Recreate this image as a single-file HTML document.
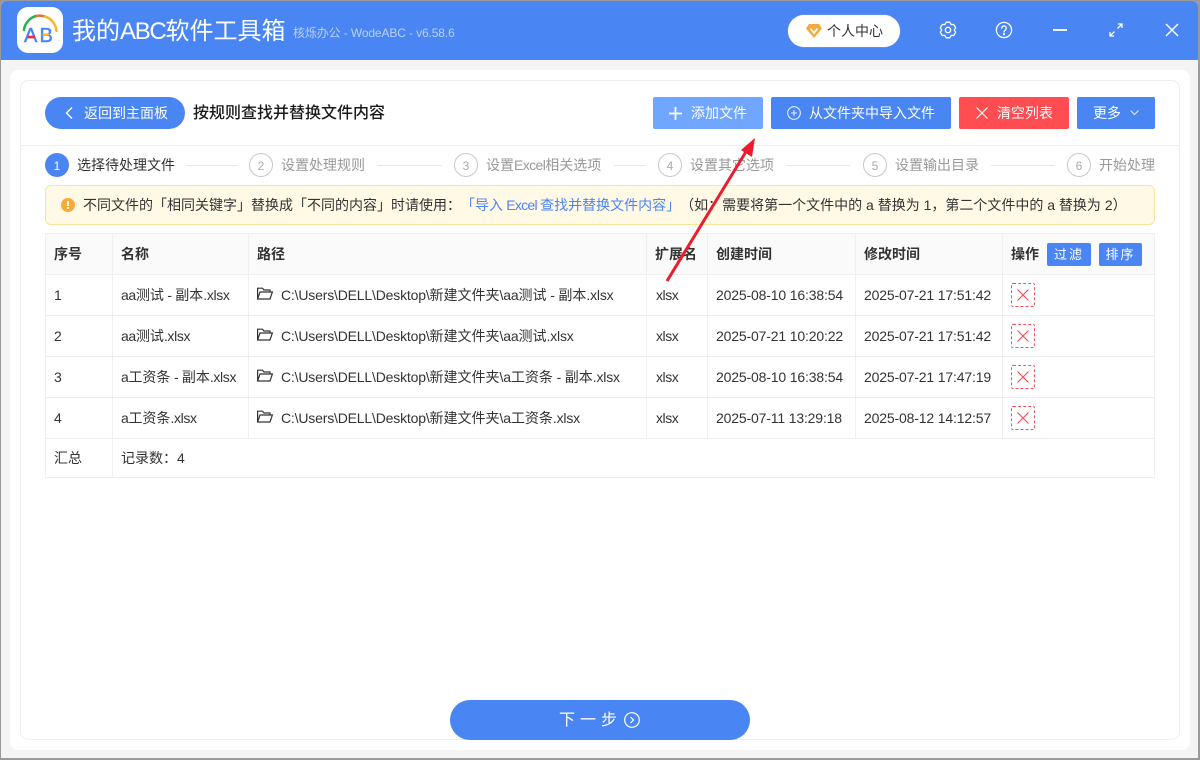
<!DOCTYPE html>
<html lang="zh"><head><meta charset="utf-8"><title>我的ABC软件工具箱</title>
<style>
*{box-sizing:border-box}
html,body{margin:0;padding:0;width:1200px;height:760px;overflow:hidden;background:#9a9a9a;font-family:"Liberation Sans","Noto Sans CJK SC",sans-serif;color:#333;text-spacing-trim:space-all}
div,span{position:absolute;white-space:nowrap}
svg{position:absolute;overflow:visible}
u{text-decoration:none;letter-spacing:-.35px}
.p u{letter-spacing:-.18px}
.t{font-size:14px;line-height:20px}
.d{letter-spacing:-.16px}
.e{letter-spacing:-.45px}
.btn{background:#4a85f4;border-radius:2px;height:32px;top:97px;color:#fff;font-size:14px;line-height:32px}
.c{width:24px;height:24px;border:1px solid #c8c8c8;border-radius:50%;top:153px;text-align:center;font-size:12px;line-height:24px;color:#aaa;background:#fff}
.l{height:1px;top:165px;background:#e8e8e8}
.s{font-size:14px;line-height:20px;top:155px;color:#999}
.s u{letter-spacing:-.6px}
.h{font-size:14px;line-height:20px;font-weight:bold;color:#333;top:244px}
.v{width:1px;background:#efefef;top:234px;height:205px}
.r{height:1px;background:#efefef;left:45px;width:1110px}
.x{width:24px;height:24px;left:1011px;border:1px dashed #f4525a;border-radius:2px}
.fb{background:#4a85f4;color:#fff;border-radius:2px;top:243px;height:23px;line-height:23px;text-align:center;font-size:13px;letter-spacing:2px}
</style></head><body>
<div id="win" style="left:1px;top:1px;width:1197px;height:757px;background:#f4f4f4;border-radius:6px 6px 0 0;overflow:hidden">
<div style="left:0;top:0;width:1197px;height:59px;background:#4a85f4"></div>
<div style="left:9px;top:69px;width:1180px;height:680px;background:#fff;border-radius:8px"></div>
<div style="left:19px;top:79px;width:1160px;height:660px;border:1px solid #eee;border-radius:8px"></div>
</div>

<!-- logo -->
<div style="left:17px;top:7px;width:46px;height:46px;background:#fff;border-radius:11px"></div>
<svg style="left:17px;top:7px" width="46" height="46" viewBox="0 0 46 46" fill="none">
<path d="M7 23A16.500 16.500 0 0 1 19 9" stroke="#2fae4e" stroke-width="2.500" stroke-linecap="round"/>
<path d="M19 9A16.500 16.500 0 0 1 28 9.500" stroke="#e8703c" stroke-width="2.500"/>
<path d="M28 9.500A16.500 16.500 0 0 1 39.500 24" stroke="#f5b62e" stroke-width="2.500" stroke-linecap="round"/>
<text x="7" y="35" font-family="Liberation Sans" font-size="20" fill="#4a85f4" stroke="#4a85f4" stroke-width=".5">A</text>
<text x="22.500" y="35" font-family="Liberation Sans" font-size="20" fill="#4a85f4" stroke="#4a85f4" stroke-width=".5">B</text>
<path d="M11 30H18" stroke="#ee2d33" stroke-width="2.600"/>
<path d="M25.500 27.500H32" stroke="#f5b62e" stroke-width="2.200"/>
</svg>
<div style="left:72px;top:15px;font-size:24px;line-height:34px;color:#fff">我的<u style="letter-spacing:-1.3px">ABC</u>软件工具箱</div>
<div style="left:293px;top:24px;font-size:12px;line-height:18px;color:#b9d0fb;letter-spacing:-.12px">核烁办公 - WodeABC - v6.58.6</div>

<!-- top right -->
<div style="left:788px;top:15px;width:112px;height:32px;background:#fff;border-radius:16px;box-shadow:0 0 1px #ccc"></div>
<svg style="left:805px;top:23px" width="18" height="16" viewBox="0 0 18 16"><path d="M4 1H14L17 5.500L9 15L1 5.500Z" fill="#f5a93a"/><path d="M5.500 5.500L9 10L12.500 5.500" fill="none" stroke="#fff" stroke-width="1.800"/></svg>
<div style="left:827px;top:21px;font-size:14px;line-height:20px;color:#333">个人中心</div>
<svg style="left:939px;top:21px" width="18" height="18" viewBox="0 0 18 18" fill="none" stroke="#fff" stroke-width="1.300" stroke-linejoin="round"><path d="M7.200 1.200H10.800L12.150 3.540H14.850L16.650 6.660L15.300 9L16.650 11.340L14.850 14.460H12.150L10.800 16.800H7.200L5.850 14.460H3.150L1.350 11.340L2.700 9L1.350 6.660L3.150 3.540H5.850Z"/><circle cx="9" cy="9" r="2.700"/></svg>
<svg style="left:995px;top:21px" width="18" height="18" viewBox="0 0 18 18" fill="none" stroke="#fff" stroke-width="1.300"><circle cx="9" cy="9" r="7.600"/><path d="M6.700 7.200A2.300 2.300 0 1 1 10.200 9.200C9.400 9.700 9 10 9 11" stroke-linecap="round"/><circle cx="9" cy="13.200" r=".5" fill="#fff"/></svg>
<svg style="left:1053px;top:29px" width="14" height="3"><rect width="14" height="2" fill="#fff" opacity=".9"/></svg>
<svg style="left:1109px;top:23px" width="14" height="14" viewBox="0 0 14 14" fill="none" stroke="#fff" stroke-width="1.300"><path d="M8.500 5.500L13 1M9 1H13V5M5.500 8.500L1 13M1 9V13H5"/></svg>
<svg style="left:1165px;top:23px" width="14" height="14" viewBox="0 0 14 14" fill="none" stroke="#fff" stroke-width="1.500"><path d="M1 1L13 13M13 1L1 13"/></svg>

<!-- toolbar -->
<div style="left:45px;top:97px;width:140px;height:32px;background:#4a85f4;border-radius:16px"></div>
<svg style="left:64px;top:106px" width="10" height="14" viewBox="0 0 10 14" fill="none" stroke="#fff" stroke-width="1.400"><path d="M8 1.500L2.500 7L8 12.500"/></svg>
<div style="left:84px;top:103px;font-size:14px;line-height:20px;color:#fff">返回到主面板</div>
<div style="left:193px;top:102px;font-size:16px;line-height:24px;color:#1a1a1a;font-weight:500">按规则查找并替换文件内容</div>

<div class="btn" style="left:653px;width:110px;background:#70a6ff"></div>
<svg style="left:669px;top:107px" width="13" height="13" viewBox="0 0 13 13" fill="none" stroke="#fff" stroke-width="1.800"><path d="M6.500 0V13M0 6.500H13"/></svg>
<div class="btn" style="left:691px;background:none;width:60px">添加文件</div>
<div class="btn" style="left:771px;width:180px"></div>
<svg style="left:787px;top:106px" width="14" height="14" viewBox="0 0 14 14" fill="none" stroke="#e8f0ff" stroke-width="1.100"><circle cx="7" cy="7" r="6.300"/><path d="M7 4V10M4 7H10"/></svg>
<div class="btn" style="left:809px;background:none">从文件夹中导入文件</div>
<div class="btn" style="left:959px;width:110px;background:#ff4d52"></div>
<svg style="left:976px;top:107px" width="12" height="12" viewBox="0 0 12 12" fill="none" stroke="#fff" stroke-width="1.200"><path d="M.500 .500L11.500 11.500M11.500 .500L.500 11.500"/></svg>
<div class="btn" style="left:997px;background:none">清空列表</div>
<div class="btn" style="left:1077px;width:78px"></div>
<div class="btn" style="left:1093px;background:none">更多</div>
<svg style="left:1130px;top:110px" width="9" height="6" viewBox="0 0 9 6" fill="none" stroke="#e8f0ff" stroke-width="1"><path d="M.500 .500L4.500 4.500L8.500 .500"/></svg>

<div style="left:21px;top:145px;width:1158px;height:1px;background:#eee"></div>

<!-- steps -->
<div class="c" style="left:45px;background:#4a85f4;border-color:#4a85f4;color:#fff">1</div>
<div class="s" style="left:77px;color:#333">选择待处理文件</div>
<div class="l" style="left:187px;width:50px"></div>
<div class="c" style="left:249px">2</div><div class="s" style="left:281px">设置处理规则</div>
<div class="l" style="left:377px;width:65px"></div>
<div class="c" style="left:454px">3</div><div class="s" style="left:486px">设置<u>Excel</u>相关选项</div>
<div class="l" style="left:613px;width:33px"></div>
<div class="c" style="left:658px">4</div><div class="s" style="left:690px">设置其它选项</div>
<div class="l" style="left:786px;width:65px"></div>
<div class="c" style="left:863px">5</div><div class="s" style="left:895px">设置输出目录</div>
<div class="l" style="left:991px;width:64px"></div>
<div class="c" style="left:1067px">6</div><div class="s" style="left:1099px">开始处理</div>

<!-- notice -->
<div style="left:45px;top:185px;width:1110px;height:40px;background:#fff9e6;border:1px solid #fbe49c;border-radius:6px"></div>
<div style="left:61px;top:198px;width:14px;height:14px;border-radius:50%;background:#f8ab36"></div>
<div style="left:67px;top:201px;width:2px;height:5px;background:#fff"></div>
<div style="left:67px;top:207px;width:2px;height:2px;background:#fff"></div>
<div class="t" style="left:83px;top:195px">不同文件的「相同关键字」替换成「不同的内容」时请使用：<u style="color:#4a85f4;letter-spacing:0">「导入<u style="letter-spacing:-.7px"> Excel </u>查找并替换文件内容」</u>（如：需要将第一个文件中的 a 替换为 1，第二个文件中的 a 替换为 2）</div>

<!-- table -->
<div style="left:45px;top:233px;width:1110px;height:42px;background:#fafafa;border-top:1px solid #efefef"></div>
<div class="r" style="top:274px"></div><div class="r" style="top:315px"></div><div class="r" style="top:356px"></div><div class="r" style="top:397px"></div><div class="r" style="top:438px"></div><div class="r" style="top:477px"></div>
<div class="v" style="left:45px;height:244px"></div><div class="v" style="left:112px;height:244px"></div><div class="v" style="left:248px"></div><div class="v" style="left:646px"></div><div class="v" style="left:707px"></div><div class="v" style="left:855px"></div><div class="v" style="left:1002px"></div><div class="v" style="left:1154px;height:244px"></div>

<div class="h" style="left:54px">序号</div><div class="h" style="left:121px">名称</div><div class="h" style="left:257px">路径</div><div class="h" style="left:655px">扩展名</div><div class="h" style="left:716px">创建时间</div><div class="h" style="left:864px">修改时间</div><div class="h" style="left:1011px">操作</div>
<div class="fb" style="left:1047px;width:44px">过滤</div><div class="fb" style="left:1099px;width:43px">排序</div>

<div class="t" style="left:54px;top:285px">1</div><div class="t" style="left:121px;top:285px"><u>aa</u>测试<u> - </u>副本<u>.xlsx</u></div><div class="t p" style="left:281px;top:285px"><u>C:\Users\DELL\Desktop\</u>新建文件夹<u>\aa</u>测试<u> - </u>副本<u>.xlsx</u></div><div class="t e" style="left:656px;top:285px">xlsx</div><div class="t d" style="left:716px;top:285px">2025-08-10 16:38:54</div><div class="t d" style="left:864px;top:285px">2025-07-21 17:51:42</div>
<div class="t" style="left:54px;top:326px">2</div><div class="t" style="left:121px;top:326px"><u>aa</u>测试<u>.xlsx</u></div><div class="t p" style="left:281px;top:326px"><u>C:\Users\DELL\Desktop\</u>新建文件夹<u>\aa</u>测试<u>.xlsx</u></div><div class="t e" style="left:656px;top:326px">xlsx</div><div class="t d" style="left:716px;top:326px">2025-07-21 10:20:22</div><div class="t d" style="left:864px;top:326px">2025-07-21 17:51:42</div>
<div class="t" style="left:54px;top:367px">3</div><div class="t" style="left:121px;top:367px"><u>a</u>工资条<u> - </u>副本<u>.xlsx</u></div><div class="t p" style="left:281px;top:367px"><u>C:\Users\DELL\Desktop\</u>新建文件夹<u>\a</u>工资条<u> - </u>副本<u>.xlsx</u></div><div class="t e" style="left:656px;top:367px">xlsx</div><div class="t d" style="left:716px;top:367px">2025-08-10 16:38:54</div><div class="t d" style="left:864px;top:367px">2025-07-21 17:47:19</div>
<div class="t" style="left:54px;top:408px">4</div><div class="t" style="left:121px;top:408px"><u>a</u>工资条<u>.xlsx</u></div><div class="t p" style="left:281px;top:408px"><u>C:\Users\DELL\Desktop\</u>新建文件夹<u>\a</u>工资条<u>.xlsx</u></div><div class="t e" style="left:656px;top:408px">xlsx</div><div class="t d" style="left:716px;top:408px">2025-07-11 13:29:18</div><div class="t d" style="left:864px;top:408px">2025-08-12 14:12:57</div>
<div class="t" style="left:54px;top:448px">汇总</div><div class="t" style="left:121px;top:448px">记录数：4</div>

<svg style="left:257px;top:287px" width="16" height="13" viewBox="0 0 16 13" fill="none" stroke="#333" stroke-width="1.200"><path d="M.600 12V1.200H5.500L7 3H13V5M.600 12L3 5H15.400L13 12Z"/></svg>
<svg style="left:257px;top:328px" width="16" height="13" viewBox="0 0 16 13" fill="none" stroke="#333" stroke-width="1.200"><path d="M.600 12V1.200H5.500L7 3H13V5M.600 12L3 5H15.400L13 12Z"/></svg>
<svg style="left:257px;top:369px" width="16" height="13" viewBox="0 0 16 13" fill="none" stroke="#333" stroke-width="1.200"><path d="M.600 12V1.200H5.500L7 3H13V5M.600 12L3 5H15.400L13 12Z"/></svg>
<svg style="left:257px;top:410px" width="16" height="13" viewBox="0 0 16 13" fill="none" stroke="#333" stroke-width="1.200"><path d="M.600 12V1.200H5.500L7 3H13V5M.600 12L3 5H15.400L13 12Z"/></svg>

<div class="x" style="top:283px"></div><div class="x" style="top:324px"></div><div class="x" style="top:365px"></div><div class="x" style="top:406px"></div>
<svg style="left:1017px;top:289px" width="12" height="12" viewBox="0 0 12 12" fill="none" stroke="#f4525a" stroke-width="1.200"><path d="M.500 .500L11.500 11.500M11.500 .500L.500 11.500"/></svg>
<svg style="left:1017px;top:330px" width="12" height="12" viewBox="0 0 12 12" fill="none" stroke="#f4525a" stroke-width="1.200"><path d="M.500 .500L11.500 11.500M11.500 .500L.500 11.500"/></svg>
<svg style="left:1017px;top:371px" width="12" height="12" viewBox="0 0 12 12" fill="none" stroke="#f4525a" stroke-width="1.200"><path d="M.500 .500L11.500 11.500M11.500 .500L.500 11.500"/></svg>
<svg style="left:1017px;top:412px" width="12" height="12" viewBox="0 0 12 12" fill="none" stroke="#f4525a" stroke-width="1.200"><path d="M.500 .500L11.500 11.500M11.500 .500L.500 11.500"/></svg>

<!-- next -->
<div style="left:450px;top:700px;width:300px;height:40px;background:#4a85f4;border-radius:20px"></div>
<div style="left:559px;top:709px;font-size:16px;line-height:24px;color:#fff;letter-spacing:5px">下一步</div>
<svg style="left:624px;top:712px" width="16" height="16" viewBox="0 0 16 16" fill="none" stroke="#fff" stroke-width="1.200"><circle cx="8" cy="8" r="7.300"/><path d="M6.500 5L9.500 8L6.500 11"/></svg>

<!-- arrow -->
<svg style="left:0;top:0" width="1200" height="760"><path d="M667 281L747 150" stroke="#ec1c2c" stroke-width="3"/><path d="M755 138L741 150L752 157Z" fill="#ec1c2c"/></svg>
</body></html>
